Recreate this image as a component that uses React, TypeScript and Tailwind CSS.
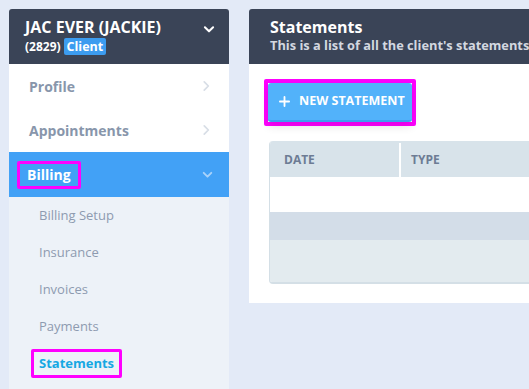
import React from 'react';

function ChevronRight({ className }: { className?: string }) {
  return (
    <svg viewBox="0 0 24 24" className={className} fill="none" stroke="currentColor" strokeWidth={3} strokeLinecap="round" strokeLinejoin="round">
      <path d="M9 5l7 7-7 7" />
    </svg>
  );
}

function ChevronDown({ className }: { className?: string }) {
  return (
    <svg viewBox="0 0 24 24" className={className} fill="none" stroke="currentColor" strokeWidth={3.5} strokeLinecap="round" strokeLinejoin="round">
      <path d="M5 9l7 7 7-7" />
    </svg>
  );
}

const subItems = ['Billing Setup', 'Insurance', 'Invoices', 'Payments'];

export default function App() {
  return (
    <div
      className="flex h-[389px] w-[529px] gap-5 overflow-hidden bg-[#e3eaf7] pl-[9px] pt-[9px]"
      style={{ fontFamily: '"Open Sans", "Liberation Sans", sans-serif' }}
    >
      {/* Sidebar */}
      <div className="flex w-[220px] shrink-0 flex-col">
        <div className="flex h-[55px] items-start justify-between rounded-t-[3px] bg-[#3a4457] pl-4 pr-[13px] pt-[8px]">
          <div>
            <div className="text-[16px] font-bold leading-[20px] text-white">JAC EVER (JACKIE)</div>
            <div className="mt-[1px] flex items-center gap-[3px] text-[12px] font-bold leading-[16px] text-white">
              <span>(2829)</span>
              <span className="rounded-[2px] bg-[#3c9cf0] px-[3px] text-[12.5px] leading-[17px]">Client</span>
            </div>
          </div>
          <ChevronDown className="mt-[5px] h-[14px] w-[14px] text-white" />
        </div>
        <div className="bg-white">
          {['Profile', 'Appointments'].map((t) => (
            <div key={t} className="flex h-[44px] items-center justify-between pl-5 pr-[16px]">
              <span className="text-[14px] font-bold text-[#8896ab]">{t}</span>
              <ChevronRight className="h-[14px] w-[14px] text-[#d8dee6]" />
            </div>
          ))}
        </div>
        <div className="flex h-[45px] items-center justify-between bg-[#42a1f6] pl-2 pr-[15px]">
          <span className="rounded-[2px] border-[3px] border-[#ff00ff] px-[7px] text-[14px] font-bold leading-[22px] text-white">
            Billing
          </span>
          <ChevronDown className="h-[13px] w-[13px] text-[#a8d2fa]" />
        </div>
        <div className="flex-1 bg-[#edf2f8]">
          {subItems.map((t) => (
            <div key={t} className="flex h-[37px] items-center pl-[30px] text-[13px] text-[#8e9bb0]">
              {t}
            </div>
          ))}
          <div className="flex h-[37px] items-center pl-[22px]">
            <span className="rounded-[2px] border-[3px] border-[#ff00ff] px-[5px] text-[13px] font-bold leading-[23px] text-[#16a8e3]">
              Statements
            </span>
          </div>
        </div>
      </div>

      {/* Main panel */}
      <div className="flex-1 self-start">
        <div className="h-[55px] rounded-tl-[3px] bg-[#3a4457] pl-[21px] pt-[8px]">
          <div className="text-[16px] font-bold leading-[20px] text-white">Statements</div>
          <div className="whitespace-nowrap text-[12.8px] font-bold leading-[16px] text-[#d3d8e0]">
            This is a list of all the client's statements
          </div>
        </div>
        <div className="h-[239px] bg-white pl-[15px] pt-[15px]">
          <div className="inline-block rounded-[2px] border-[4px] border-[#ff00ff]">
            <button className="flex h-[39px] w-[144px] items-center gap-[9px] rounded-[3px] border-b-2 border-[#3b9ff0] bg-[#52b2fa] pl-[11px] text-[12.5px] font-bold text-white shadow-[0_4px_10px_rgba(0,0,0,0.12)]">
              <svg viewBox="0 0 12 12" className="h-[11px] w-[11px]" stroke="currentColor" strokeWidth={2} strokeLinecap="round">
                <path d="M6 1v10M1 6h10" />
              </svg>
              NEW STATEMENT
            </button>
          </div>
          <div className="ml-[5px] mt-[15px] overflow-hidden rounded-l-[4px] border-b-2 border-l border-[#d4dfe6]">
            <div className="flex h-[36px] bg-[#d8e3ea] pt-[2px] text-[12px] font-bold text-[#6d7c94]">
              <div className="flex w-[131px] items-center border-r-2 border-white pl-[14px]">DATE</div>
              <div className="flex flex-1 items-center pl-[10px]">TYPE</div>
            </div>
            <div className="h-[35px] bg-white" />
            <div className="h-[28px] bg-[#d3dde8]" />
            <div className="h-[42px] bg-[#e3ebef]" />
          </div>
        </div>
      </div>
    </div>
  );
}
